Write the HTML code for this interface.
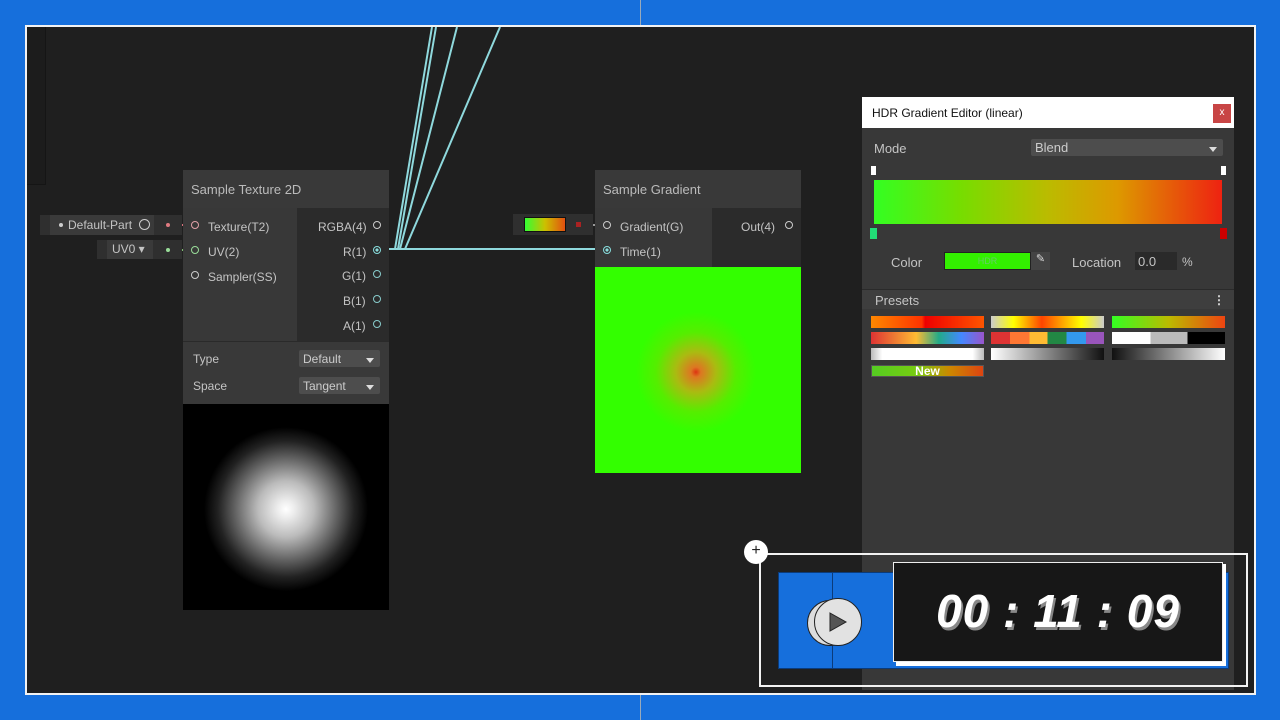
<!DOCTYPE html>
<html><head><style>
*{margin:0;padding:0;box-sizing:border-box}
body{width:1280px;height:720px;background:#166fdc;position:relative;overflow:hidden;font-family:"Liberation Sans",sans-serif;font-size:12px;color:#c4c4c4}
.a{position:absolute}
.frame{left:25px;top:25px;width:1231px;height:670px;border:2px solid #f2f2f2;background:#1f1f1f;overflow:hidden}
.node{background:#393939}
.port{width:8px;height:8px;border:1.5px solid #ccc;border-radius:50%;position:absolute}
.dd{background:#4d4d4d;border-radius:2px;color:#ccc;font-size:12px;padding:2px 4px}
.dd:after{content:"";position:absolute;right:6px;top:8px;border:4px solid transparent;border-top:5px solid #ddd}
</style></head><body>
<div class="a" style="left:640px;top:0;width:1px;height:25px;background:#9ab"></div>
<div class="a" style="left:640px;top:695px;width:1px;height:25px;background:#9ab"></div>
<div class="a frame">
<div class="a" style="left:0;top:0;width:19px;height:158px;border-right:1px solid #151515;border-bottom:1px solid #151515;background:#1c1c1c"></div>
</div>
<svg class="a" style="left:0;top:0" width="1280" height="720">
<g stroke="#8fd9dd" stroke-width="2" fill="none">
<path d="M378 249 L395 249 L432 27"/><path d="M380 249 L398 249 L436 27"/><path d="M385 249 L400 249 L457 27"/><path d="M390 249 L405 249 L500 27"/>
<path d="M380 249 L600 249"/>
</g>
<path d="M170 225 L196 225" stroke="#d9707a" stroke-width="2"/>
<path d="M170 250 L196 250" stroke="#7fbf70" stroke-width="2"/>
<path d="M580 225 L606 225" stroke="#999" stroke-width="2"/>
</svg>
<!-- left inputs -->
<div class="a" style="left:40px;top:215px;width:142px;height:20px;background:#2f2f2f"></div>
<div class="a" style="left:50px;top:215px;width:104px;height:20px;background:#3a3a3a;font-size:12px;padding:3px 0 0 18px">Default-Part</div>
<div class="a" style="left:59px;top:223px;width:4px;height:4px;background:#ccc;border-radius:50%"></div>
<div class="a" style="left:139px;top:219px;width:11px;height:11px;border:1.5px solid #ccc;border-radius:50%"></div>
<div class="a" style="left:166px;top:223px;width:4px;height:4px;background:#e07a80;border-radius:50%"></div>
<div class="a" style="left:97px;top:240px;width:85px;height:19px;background:#2f2f2f"></div>
<div class="a" style="left:107px;top:240px;width:46px;height:19px;background:#3a3a3a;padding:2px 0 0 5px">UV0 ▾</div>
<div class="a" style="left:166px;top:248px;width:4px;height:4px;background:#9d9;border-radius:50%"></div>
<!-- Sample Texture 2D -->
<div class="a node" style="left:183px;top:170px;width:206px;height:38px;padding:12px 8px;font-size:13px;color:#bbb">Sample Texture 2D</div>
<div class="a" style="left:183px;top:208px;width:114px;height:133px;background:#383838"></div>
<div class="a" style="left:297px;top:208px;width:92px;height:133px;background:#2b2b2b"></div>
<div class="a" style="left:208px;top:220px">Texture(T2)</div>
<div class="a" style="left:208px;top:245px">UV(2)</div>
<div class="a" style="left:208px;top:270px">Sampler(SS)</div>
<div class="port" style="left:191px;top:221px;border-color:#e0a0a8"></div>
<div class="port" style="left:191px;top:246px;border-color:#9d9"></div>
<div class="port" style="left:191px;top:271px"></div>
<div class="a" style="left:318px;top:220px">RGBA(4)</div>
<div class="a" style="left:343px;top:245px">R(1)</div>
<div class="a" style="left:342px;top:269px">G(1)</div>
<div class="a" style="left:343px;top:294px">B(1)</div>
<div class="a" style="left:343px;top:319px">A(1)</div>
<div class="port" style="left:373px;top:221px"></div>
<div class="port" style="left:373px;top:246px;border-color:#8dd;background:radial-gradient(#8dd 35%,transparent 40%)"></div>
<div class="port" style="left:373px;top:270px;border-color:#8cc"></div>
<div class="port" style="left:373px;top:295px;border-color:#8cc"></div>
<div class="port" style="left:373px;top:320px;border-color:#8cc"></div>
<div class="a node" style="left:183px;top:341px;width:206px;height:63px;border-top:1px solid #2a2a2a"></div>
<div class="a" style="left:193px;top:352px">Type</div>
<div class="a" style="left:193px;top:379px">Space</div>
<div class="a dd" style="left:299px;top:350px;width:81px;height:17px">Default</div>
<div class="a dd" style="left:299px;top:377px;width:81px;height:17px">Tangent</div>
<div class="a" style="left:183px;top:404px;width:206px;height:206px;background:radial-gradient(circle at 50% 51%,#fff 0,#eee 8px,#bbb 28px,#666 50px,#222 68px,#000 82px)"></div>
<!-- Sample Gradient -->
<div class="a" style="left:513px;top:214px;width:80px;height:21px;background:#2f2f2f"></div>
<div class="a" style="left:524px;top:217px;width:42px;height:15px;background:linear-gradient(90deg,#3f3,#ccc000,#e25010);border:1px solid #111"></div>
<div class="a" style="left:576px;top:222px;width:5px;height:5px;background:#a22"></div>
<div class="a node" style="left:595px;top:170px;width:206px;height:38px;padding:12px 8px;font-size:13px;color:#bbb">Sample Gradient</div>
<div class="a" style="left:595px;top:208px;width:117px;height:59px;background:#383838"></div>
<div class="a" style="left:712px;top:208px;width:89px;height:59px;background:#2b2b2b"></div>
<div class="a" style="left:620px;top:220px">Gradient(G)</div>
<div class="a" style="left:620px;top:245px">Time(1)</div>
<div class="a" style="left:741px;top:220px">Out(4)</div>
<div class="port" style="left:603px;top:221px"></div>
<div class="port" style="left:603px;top:246px;border-color:#8dd;background:radial-gradient(#8dd 35%,transparent 40%)"></div>
<div class="port" style="left:785px;top:221px"></div>
<div class="a" style="left:595px;top:267px;width:206px;height:206px;background:radial-gradient(circle at 49% 51%,#d31 0,#d72 5px,#ab1 20px,#5e0 40px,#33ff00 60px)"></div>
<!-- HDR editor -->
<div class="a" style="left:862px;top:97px;width:372px;height:593px;background:#383838"></div>
<div class="a" style="left:862px;top:97px;width:372px;height:31px;background:#fff;color:#111;font-size:12px;padding:9px 10px">HDR Gradient Editor (linear)</div>
<div class="a" style="left:1213px;top:104px;width:18px;height:19px;background:#c84545;color:#fff;font-size:10px;text-align:center;line-height:18px">x</div>
<div class="a" style="left:874px;top:141px;font-size:13px">Mode</div>
<div class="a dd" style="left:1031px;top:139px;width:192px;height:17px;font-size:13px;padding-top:1px">Blend</div>
<div class="a" style="left:871px;top:166px;width:5px;height:9px;background:#fff"></div>
<div class="a" style="left:1221px;top:166px;width:5px;height:9px;background:#fff"></div>
<div class="a" style="left:874px;top:180px;width:348px;height:44px;background:linear-gradient(90deg,#3f2,#7d0 25%,#bb0 50%,#d90 70%,#e21 100%)"></div>
<div class="a" style="left:870px;top:228px;width:7px;height:11px;background:#2d7"></div>
<div class="a" style="left:1220px;top:228px;width:7px;height:11px;background:#c00"></div>
<div class="a" style="left:891px;top:255px;font-size:13px">Color</div>
<div class="a" style="left:944px;top:252px;width:87px;height:18px;background:#33f000;border:1px solid #222;color:#6c6;font-size:9px;text-align:center;line-height:16px">HDR</div>
<div class="a" style="left:1031px;top:252px;width:19px;height:18px;background:#444;color:#ddd;font-size:11px;text-align:center">✎</div>
<div class="a" style="left:1072px;top:255px;font-size:13px">Location</div>
<div class="a" style="left:1135px;top:252px;width:42px;height:18px;background:#2a2a2a;padding:2px 3px;font-size:13px">0.0</div>
<div class="a" style="left:1182px;top:255px;font-size:12px">%</div>
<div class="a" style="left:862px;top:289px;width:372px;height:20px;background:#3e3e3e;border-top:1px solid #2a2a2a;padding:3px 13px;font-size:13px">Presets</div>
<div class="a" style="left:1213px;top:293px;color:#ddd;font-weight:bold">⋮</div>
<div class="a" style="left:871px;top:316px;width:113px;height:12px;background:linear-gradient(90deg,#f80,#f30 45%,#e00 48%,#f50)"></div>
<div class="a" style="left:991px;top:316px;width:113px;height:12px;background:linear-gradient(90deg,#ccc,#ff0 20%,#f40 45%,#ff0 80%,#ccc)"></div>
<div class="a" style="left:1112px;top:316px;width:113px;height:12px;background:linear-gradient(90deg,#3f2,#bb0 50%,#e41)"></div>
<div class="a" style="left:871px;top:332px;width:113px;height:12px;background:linear-gradient(90deg,#d33,#fb3 40%,#2a8 60%,#48f 80%,#95c)"></div>
<div class="a" style="left:991px;top:332px;width:113px;height:12px;background:linear-gradient(90deg,#d33 0 17%,#f73 17% 34%,#fb3 34% 50%,#284 50% 67%,#39e 67% 84%,#95b 84%)"></div>
<div class="a" style="left:1112px;top:332px;width:113px;height:12px;background:linear-gradient(90deg,#fff 0 34%,#bbb 34% 67%,#000 67%)"></div>
<div class="a" style="left:871px;top:348px;width:113px;height:12px;background:linear-gradient(90deg,#bbb,#fff 10%,#fff 90%,#bbb)"></div>
<div class="a" style="left:991px;top:348px;width:113px;height:12px;background:linear-gradient(90deg,#fff,#111)"></div>
<div class="a" style="left:1112px;top:348px;width:113px;height:12px;background:linear-gradient(90deg,#111,#fff)"></div>
<div class="a" style="left:871px;top:365px;width:113px;height:12px;background:linear-gradient(90deg,#5c2,#7c1 40%,#c80 70%,#d41);border:1px solid #555;color:#fff;font-weight:bold;font-size:12px;text-align:center;line-height:10px">New</div>
<!-- timer -->
<div class="a" style="left:759px;top:553px;width:489px;height:134px;border:2px solid #f2f2f2"></div>
<div class="a" style="left:744px;top:540px;width:24px;height:24px;border-radius:50%;background:#fff;color:#222;text-align:center;line-height:22px;font-size:16px">+</div>
<div class="a" style="left:778px;top:572px;width:451px;height:97px;background:#166fdc;border:1px solid #0b3b7a"></div>
<div class="a" style="left:832px;top:572px;width:1px;height:97px;background:#0b3b7a"></div>
<div class="a" style="left:807px;top:600px;width:46px;height:46px;border-radius:50%;background:#ddd;border:1.5px solid #222"></div>
<div class="a" style="left:814px;top:598px;width:48px;height:48px;border-radius:50%;background:#e2e2e2;border:1.5px solid #222"></div>
<svg class="a" style="left:828px;top:611px" width="20" height="22"><path d="M2 2 L18 11 L2 20Z" fill="#555" stroke="#222"/></svg>
<div class="a" style="left:896px;top:564px;width:330px;height:102px;background:#fff"></div>
<div class="a" style="left:893px;top:562px;width:330px;height:100px;background:#171717;border:1px solid #eee"></div>
<div class="a" style="left:893px;top:584px;width:330px;text-align:center;font-size:46px;font-weight:bold;font-style:italic;color:#fff;letter-spacing:1px;text-shadow:2px 3px 0 #888">00 : 11 : 09</div>
</body></html>
